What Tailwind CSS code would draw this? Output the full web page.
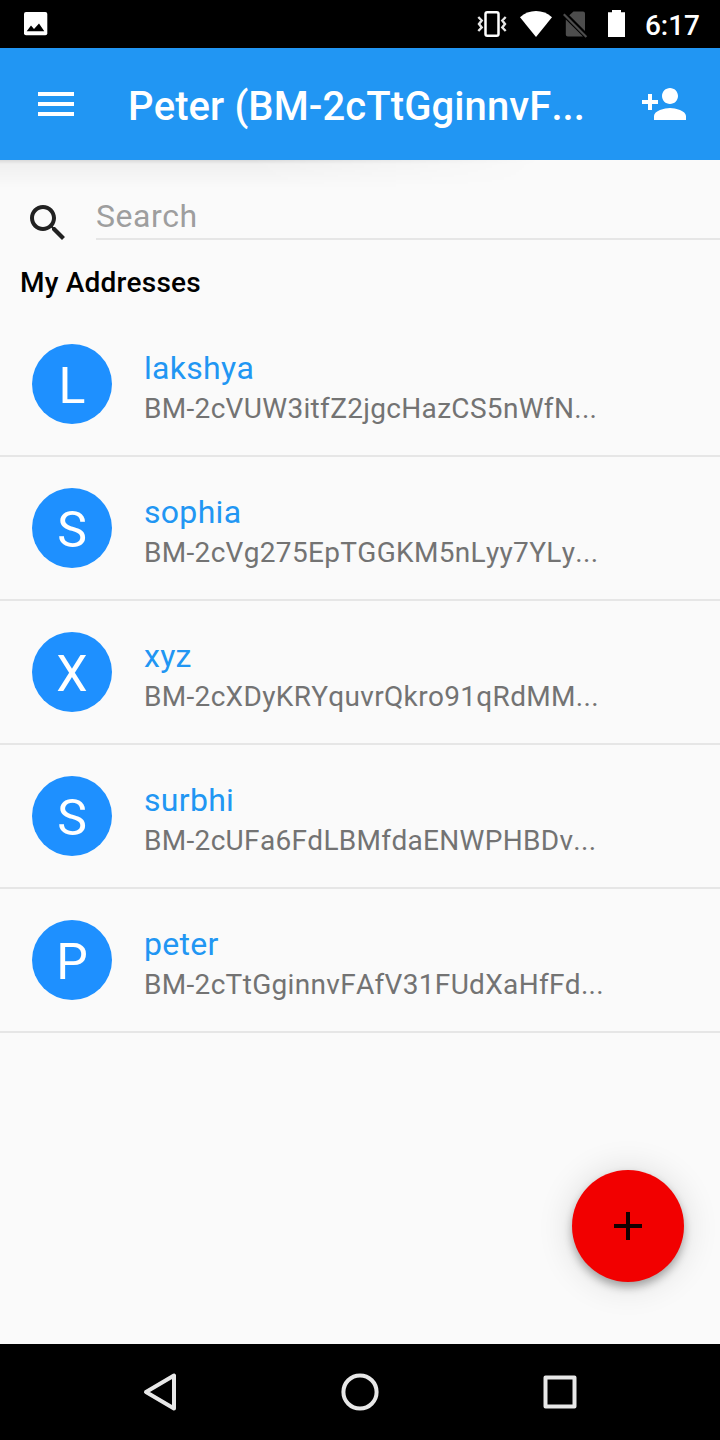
<!DOCTYPE html>
<html lang="en">
<head>
    <meta charset="UTF-8">
    <meta name="viewport" content="width=device-width, initial-scale=1.0">
    <title>My Addresses</title>
    <script src="https://cdn.jsdelivr.net/npm/@tailwindcss/browser@4"></script>
</head>
<body class="bg-black font-[Roboto,sans-serif] [font-kerning:none]">
    <div class="relative flex h-[1440px] w-[720px] flex-col overflow-hidden bg-[#fafafa]">

        <!-- Status bar -->
        <div class="flex h-12 shrink-0 items-center justify-between bg-black pr-5 pl-6 text-white">
            <svg class="h-12 w-6" viewBox="0 0 24 48">
                <rect x="0" y="12" width="23.3" height="23.2" rx="2" fill="#fff"/>
                <path d="M2.7 31.3 7 25.6l3 3.4 5-5.6 5.3 7.9z" fill="#000"/>
            </svg>
            <div class="flex items-center">
                <svg class="h-12 w-[164px]" viewBox="472 0 164 48">
                    <!-- vibrate -->
                    <rect x="485.5" y="12.2" width="13" height="23.6" rx="1.8" fill="none" stroke="#fff" stroke-width="2.5"/>
                    <path d="M478.3 17l3.4 3.500-2.700 3.500 2.700 3.500-3.400 3.500M505.700 17l-3.400 3.500 2.700 3.500-2.700 3.500 3.400 3.500" fill="none" stroke="#e6e6e6" stroke-width="2.4"/>
                    <!-- wifi -->
                    <path d="M536 37 520 17.3C524.5 13 530 11 536 11s11.5 2 16 6.3z" fill="#fff"/>
                    <!-- no sim -->
                    <path d="M573.5 11.5h9.5a2 2 0 0 1 2 2V31L569.3 15.3zM565.8 19.5 583 36.5H567.8a2 2 0 0 1-2-2z" fill="#4d4d4d"/>
                    <path d="M563.8 14.2 586.4 37" stroke="#4d4d4d" stroke-width="2.2"/>
                    <!-- battery -->
                    <path d="M608 12.3h4V10h9v2.3h4V37h-17z" fill="#fff"/>
                </svg>
                <span class="ml-[9px] pt-[3px] text-[28px] leading-8 font-medium">6:17</span>
            </div>
        </div>

        <!-- Toolbar -->
        <header class="flex h-28 shrink-0 items-center bg-[#2196f3] pr-8 pl-8 text-white">
            <svg class="size-12" viewBox="0 0 24 24" fill="currentColor"><path d="M3 18h18v-2H3v2zm0-5h18v-2H3v2zm0-7v2h18V6H3z"/></svg>
            <h1 class="ml-12 flex-1 pt-[5px] text-[40px] leading-12 font-medium tracking-[0.1px] whitespace-nowrap">Peter (BM-2cTtGginnvF...</h1>
            <svg class="size-12" viewBox="0 0 24 24" fill="currentColor"><path d="M15 12c2.210 0 4-1.790 4-4s-1.790-4-4-4-4 1.790-4 4 1.790 4 4 4zm-9-2V7H4v3H1v2h3v3h2v-3h3v-2H6zm9 4c-2.670 0-8 1.340-8 4v2h16v-2c0-2.660-5.330-4-8-4z"/></svg>
        </header>
        <!-- the toolbar shadow fades out to the right -->
        <div class="h-8 shrink-0 bg-[linear-gradient(to_bottom,rgba(0,0,0,0.13),rgba(0,0,0,0.04)_4px,rgba(0,0,0,0.02)_16px,transparent_28px)] [mask-image:linear-gradient(to_right,black_35%,transparent_75%)]"></div>

        <!-- Search -->
        <div class="flex h-12 shrink-0">
            <svg class="mt-[7px] ml-6 size-12 shrink-0" viewBox="0 0 24 24" fill="#212121"><path d="M15.5 14h-.79l-.28-.27C15.410 12.590 16 11.110 16 9.500 16 5.910 13.090 3 9.500 3S3 5.910 3 9.500 5.910 16 9.500 16c1.610 0 3.090-.59 4.230-1.570l.27.28v.79l5 4.990L20.490 19l-4.990-5zm-6 0C7.010 14 5 11.990 5 9.500S7.010 5 9.500 5 14 7.010 14 9.500 11.990 14 9.500 14z"/></svg>
            <div class="ml-6 flex-1 border-b-2 border-[#e6e6e6] pt-1 text-[32px] leading-10 tracking-[0.5px] text-[#9e9e9e]">Search</div>
        </div>

        <h2 class="mt-6 mb-[9px] ml-5 h-10 shrink-0 text-[28px] leading-[38px] font-medium tracking-[0.2px] text-black">My Addresses</h2>

        <ul id="addresses" class="flex flex-col"></ul>

        <!-- Add button -->
        <button class="absolute top-[1169.5px] left-[572px] flex size-28 items-center justify-center rounded-full bg-[#f20000] shadow-[0_5px_8px_rgba(0,0,0,0.3),0_2px_36px_rgba(0,0,0,0.14)]">
            <svg class="size-12" viewBox="0 0 24 24" fill="#150000"><path d="M19 13h-6v6h-2v-6H5v-2h6V5h2v6h6v2z"/></svg>
        </button>

        <!-- Navigation bar -->
        <nav class="mt-auto flex h-24 shrink-0 items-center justify-between bg-black px-[136px]">
            <svg class="size-12" viewBox="0 0 48 48" fill="none" stroke="#e8e8e8" stroke-width="4" stroke-linejoin="round"><path d="M38 7.5v33L10 24z"/></svg>
            <svg class="size-12" viewBox="0 0 48 48" fill="none" stroke="#e8e8e8" stroke-width="4"><circle cx="24" cy="24" r="16.6"/></svg>
            <svg class="size-12" viewBox="0 0 48 48" fill="none" stroke="#e8e8e8" stroke-width="4" stroke-linejoin="round"><path d="M9.5 9.5h29v29h-29z"/></svg>
        </nav>
    </div>

    <script>
        const addresses = [
            { label: 'lakshya', address: 'BM-2cVUW3itfZ2jgcHazCS5nWfN...' },
            { label: 'sophia', address: 'BM-2cVg275EpTGGKM5nLyy7YLy...' },
            { label: 'xyz', address: 'BM-2cXDyKRYquvrQkro91qRdMM...' },
            { label: 'surbhi', address: 'BM-2cUFa6FdLBMfdaENWPHBDv...' },
            { label: 'peter', address: 'BM-2cTtGginnvFAfV31FUdXaHfFd...' }
        ];

        document.getElementById('addresses').innerHTML = addresses.map(item => `
            <li class="flex h-36 items-start border-b-2 border-[#e6e6e6] pt-[31px] pl-8">
                <div class="flex size-20 shrink-0 items-center justify-center rounded-full bg-[#1e90ff] pt-[3px] text-[50px] leading-none text-white">${item.label[0].toUpperCase()}</div>
                <div class="ml-8 pt-1 whitespace-nowrap">
                    <p class="text-[32px] leading-10 tracking-[0.3px] text-[#2196f3]">${item.label}</p>
                    <p class="pt-px text-[28px] leading-10 tracking-[0.32px] text-[#737373]">${item.address}</p>
                </div>
            </li>
        `).join('');
    </script>
</body>
</html>
